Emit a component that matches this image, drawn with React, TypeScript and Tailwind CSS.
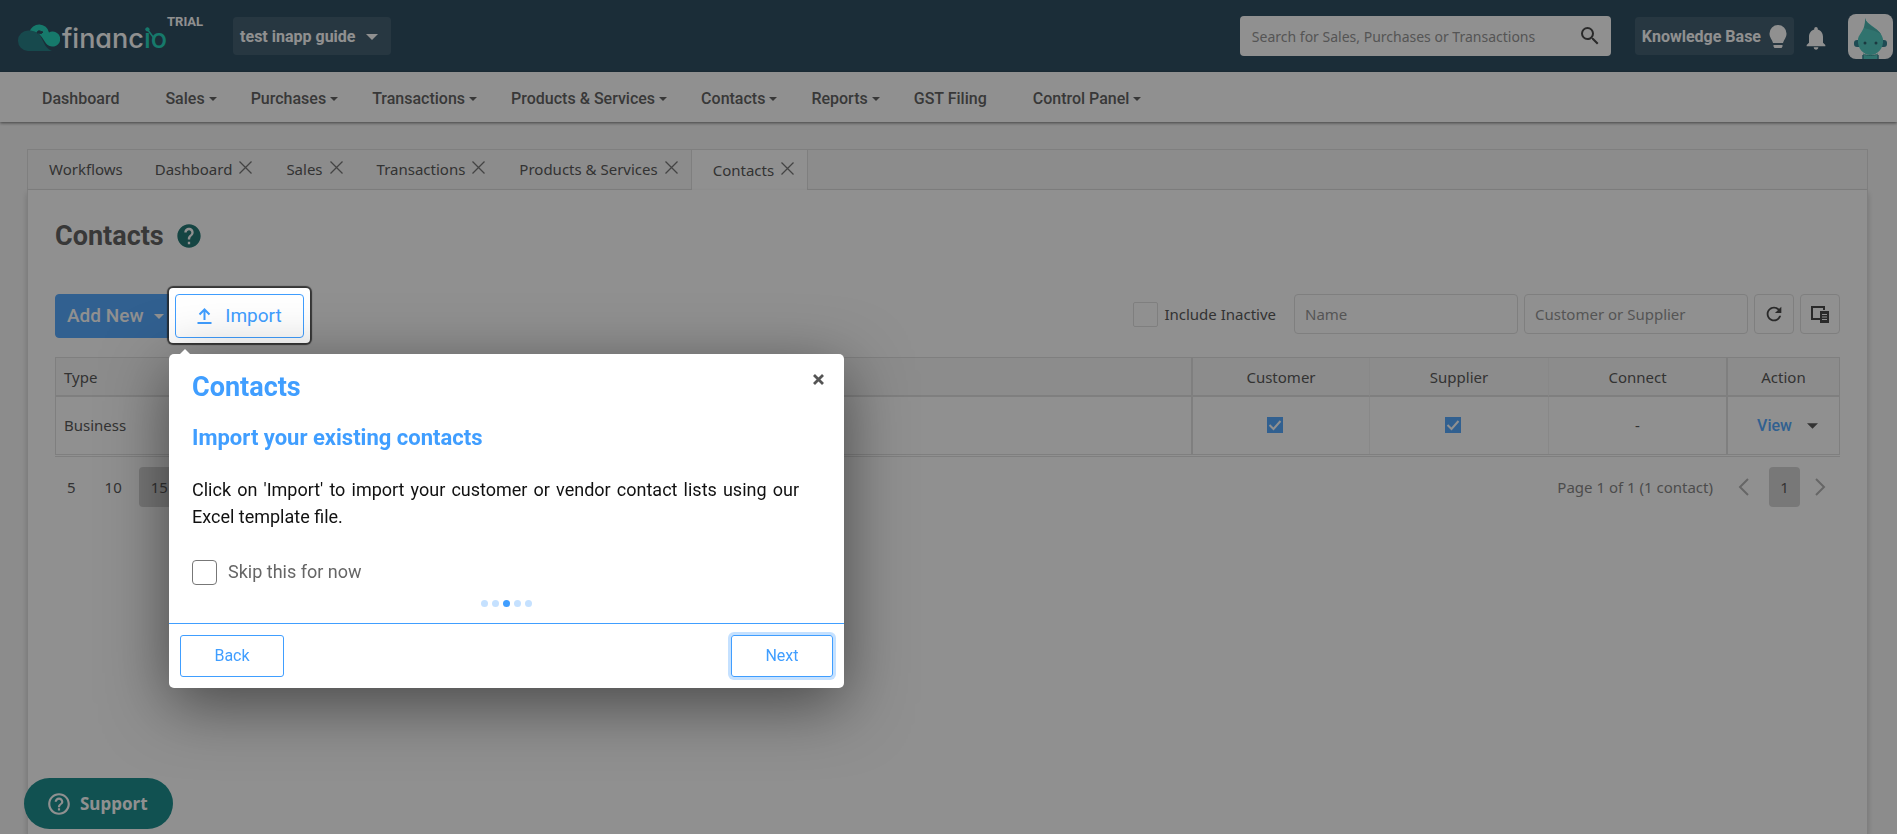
import { ReactNode } from "react";
import clsx from "clsx";
import {
  MdSearch,
  MdHelp,
  MdHelpOutline,
  MdRefresh,
  MdNotifications,
} from "react-icons/md";

const navItems = [
  { label: "Dashboard", menu: false },
  { label: "Sales", menu: true },
  { label: "Purchases", menu: true },
  { label: "Transactions", menu: true },
  { label: "Products & Services", menu: true },
  { label: "Contacts", menu: true },
  { label: "Reports", menu: true },
  { label: "GST Filing", menu: false },
  { label: "Control Panel", menu: true },
];

const tabs = [
  "Dashboard",
  "Sales",
  "Transactions",
  "Products & Services",
  "Contacts",
];

const contacts = [
  { type: "Business", customer: true, supplier: true, connect: "-" },
];

const pageSizes = [5, 10, 15];

const Caret = ({ className }: { className: string }) => (
  <svg viewBox="0 0 10 5" className={className} fill="currentColor">
    <path d="M0 0h10L5 5z" />
  </svg>
);

const Cross = () => (
  <svg viewBox="0 0 13 13" className="h-[13px] w-[13px]" stroke="currentColor">
    <path d="M.5.5l12 12M12.500.5l-12 12" fill="none" strokeWidth="1.300" />
  </svg>
);

const Logo = () => (
  <a href="#" className="flex items-start text-white">
    <svg viewBox="0 0 42 30" className="mt-[6px] h-[30px] w-[42px]">
      <path
        d="M11.500 11A10 10 0 0 1 31 11.500A7.500 7.500 0 1 1 34 25.500C27 25 26 17 21 13z"
        fill="#0bd0b5"
      />
      <path
        d="M10.500 9.500C17 9.500 21 12 23.500 17C26 22 28 28 34 30H10A10 10 0 0 1 10.500 9.500z"
        fill="#0c7178"
      />
      <path
        d="M19 12c0-2 2-3 4-1.500l2 .5-1.500 1.500z"
        fill="#15394f"
        stroke="#15394f"
      />
    </svg>
    <span className="relative mt-[6px] ml-[2px] font-['Inter'] text-[27px] leading-[36px] font-medium [font-feature-settings:'cv11','ss03']">
      financ<span className="text-[#0bd0b5]">io</span>
      <svg
        viewBox="0 0 22 24"
        className="absolute right-0 top-[6px] h-6 w-[22px]"
      >
        <path d="M2.500 2.500l6 8" stroke="#0bd0b5" strokeWidth="1.500" />
        <circle cx="2.500" cy="2.500" r="2" fill="#0bd0b5" />
      </svg>
    </span>
    <span className="mt-px text-[13px] leading-3 font-bold">TRIAL</span>
  </a>
);

const Avatar = () => (
  <svg viewBox="0 0 45 45" className="h-[45px] w-[45px] rounded-lg bg-white">
    <rect x="6" y="26" width="33" height="7" rx="3" fill="#1c7486" />
    <path
      d="M17 4c1 7 16 10 18 21 1 10-6 16-12.500 16S9 35 10 25c1-6 8-9 7-21z"
      fill="#3fc5bb"
    />
    <path d="M17 4c1 7 12 10 16 16-7-4-14-5-17-6 1-3 1-6 1-10z" fill="#35aca6" />
    <path d="M15 41h15v4H15z" fill="#3fc5bb" />
    <path d="M15 41v4M30 41v4" stroke="#1c7486" strokeWidth="1.500" />
    <path d="M15 40c4 2 11 2 15 0" stroke="#278f8d" fill="none" />
    <circle cx="17" cy="29" r="1.500" fill="#15505f" />
    <circle cx="28" cy="29" r="1.500" fill="#15505f" />
  </svg>
);

const Tick = ({ label }: { label: string }) => (
  <span className="relative mr-3 mb-1 inline-block h-4 w-4 align-middle">
    <input
      type="checkbox"
      aria-label={label}
      defaultChecked
      className="block h-4 w-4 appearance-none bg-[#409eff]"
    />
    <svg
      viewBox="0 0 16 16"
      className="pointer-events-none absolute inset-0"
      fill="none"
      stroke="#fff"
      strokeWidth="2"
    >
      <path d="M2.500 8l4 4 7-8" />
    </svg>
  </span>
);

const SquareButton = ({
  label,
  children,
}: {
  label: string;
  children: ReactNode;
}) => (
  <button
    aria-label={label}
    className="flex h-10 w-10 items-center justify-center rounded border border-[#dcdcdc] text-[#333]"
  >
    {children}
  </button>
);

const Header = () => (
  <header className="flex h-[72px] items-center justify-between bg-[#15394f] pr-1 pl-[18px] font-['Roboto']">
    <div className="flex items-center">
      <Logo />
      <button className="ml-[30px] flex h-[38px] items-center gap-[11px] rounded bg-white/10 pt-px pr-[13px] pl-[7px] font-bold text-white">
        test inapp guide
        <Caret className="h-[6px] w-3" />
      </button>
    </div>
    <div className="flex items-center">
      <div className="relative">
        <input
          aria-label="Search"
          placeholder="Search for Sales, Purchases or Transactions"
          className="h-10 w-[371px] rounded bg-white px-3 font-['Noto_Sans'] text-[14px] placeholder:text-[#888]"
        />
        <MdSearch className="absolute top-2 right-[9px] h-6 w-6 text-[#333]" />
      </div>
      <button className="ml-6 flex h-[38px] items-center gap-2 rounded bg-white/10 pt-px pr-[7px] pl-[7px] font-bold text-white">
        Knowledge Base
        <svg viewBox="0 0 18 24" className="h-6 w-[18px]" fill="currentColor">
          <path d="M9 0a8.500 8.500 0 0 1 8.500 8.500c0 4-2.500 6-3.500 9.500H4C3 14.500.5 12.500.5 8.500A8.500 8.500 0 0 1 9 0zM4.500 20h9v1.500l-1 1.500h-7l-1-1.500z" />
        </svg>
      </button>
      <button aria-label="Notifications" className="ml-[8px] pt-1 text-white">
        <MdNotifications className="h-7 w-7" />
      </button>
      <a href="#" aria-label="Profile" className="ml-[18px]">
        <Avatar />
      </a>
    </div>
  </header>
);

const Navbar = () => (
  <nav className="flex h-[50px] items-center bg-white px-[25px] pt-[3px] font-['Roboto'] font-medium text-[#4f4f4f] shadow-[0_1px_3px_rgba(0,0,0,0.6)]">
    {navItems.map((item) => (
      <a
        key={item.label}
        href="#"
        className={clsx(
          "flex items-center gap-1 pl-[17px]",
          item.menu ? "pr-[17px]" : "pr-[29px]"
        )}
      >
        {item.label}
        {item.menu && <Caret className="h-1 w-2" />}
      </a>
    ))}
  </nav>
);

const TabBar = () => (
  <div className="flex h-[41px] border border-b-0 border-[#dcdcdc] bg-[#f7f7f7]">
    <button className="border-b border-[#dcdcdc] pr-[11px] pl-[21px]">
      Workflows
    </button>
    {tabs.map((tab) => (
      <div
        key={tab}
        className={clsx(
          "flex items-center gap-[7px] border-[#dcdcdc] pr-[13px] pl-[21px]",
          tab === "Contacts" ? "border-x bg-white" : "border-b"
        )}
      >
        <button>{tab}</button>
        <button aria-label={`Close ${tab}`} className="pb-1 text-[#666]">
          <Cross />
        </button>
      </div>
    ))}
    <div className="flex-1 border-b border-[#dcdcdc]" />
  </div>
);

const GuideDialog = () => (
  <div
    role="dialog"
    aria-labelledby="guide-title"
    className="absolute top-[60px] -left-[6px] z-50 w-[675px] rounded-[5px] bg-white font-['Roboto'] text-[16px] font-normal shadow-[0_16px_64px_rgba(0,0,0,0.5)]"
  >
    <span className="absolute -top-[5px] left-[11px] text-white">
      <Caret className="block h-[5px] w-[10px] rotate-180" />
    </span>
    <button
      aria-label="Close guide"
      className="absolute top-5 right-5 text-[#555]"
    >
      <svg viewBox="0 0 11 11" className="h-[11px] w-[11px]">
        <path d="M1 1l9 9M10 1l-9 9" stroke="currentColor" strokeWidth="2.800" />
      </svg>
    </button>
    <div className="pt-[17px] pr-[45px] pl-[23px]">
      <h2
        id="guide-title"
        className="text-[27px] leading-8 font-bold text-[#409eff]"
      >
        Contacts
      </h2>
      <h3 className="mt-[19px] text-[22px] leading-8 font-bold text-[#409eff]">
        Import your existing contacts
      </h3>
      <p className="mt-[22px] text-justify text-[18px] leading-[27px] text-[#111]">
        Click on 'Import' to import your customer or vendor contact lists using
        our Excel template file.
      </p>
      <label className="mt-7 flex items-center gap-[11px] text-[18px] leading-7 text-[#666]">
        <input
          type="checkbox"
          className="h-[25px] w-[25px] appearance-none rounded border border-[#777]"
        />
        Skip this for now
      </label>
    </div>
    <div className="mt-[14px] flex justify-center gap-1">
      {[0, 1, 2, 3, 4].map((step) => (
        <span
          key={step}
          className={clsx(
            "h-[7px] w-[7px] rounded-full",
            step === 2 ? "bg-[#409eff]" : "bg-[#c5e1ff]"
          )}
        />
      ))}
    </div>
    <div className="mt-4 flex justify-between border-t border-[#409eff] p-[11px]">
      <button className="h-[42px] w-[104px] rounded-[3px] border border-[#409eff] text-[#409eff]">
        Back
      </button>
      <button className="h-[42px] w-[102px] rounded-[3px] border border-[#409eff] text-[#409eff] ring-3 ring-[#c5e1ff]">
        Next
      </button>
    </div>
  </div>
);

const Toolbar = () => (
  <div className="flex items-start justify-between">
    <div className="flex font-['Roboto'] font-normal">
      <button className="flex h-11 w-[118px] items-center gap-[10px] rounded border border-[#409eff] bg-[#409eff] pl-[11px] text-[19px] font-medium text-white">
        Add New
        <Caret className="h-[5px] w-[10px]" />
      </button>
      <div className="relative ml-[2px]">
        {/* dims everything except the highlighted button */}
        <div className="absolute -inset-x-[6px] -top-[6px] -bottom-[5px] z-40 rounded bg-white shadow-[0_0_1px_2px_rgba(33,33,33,0.8),0_0_0_5000px_rgba(33,33,33,0.5)]" />
        <button className="relative z-40 flex h-11 w-[129px] items-center justify-center gap-[13px] rounded border border-[#409eff] bg-white text-[19px] text-[#409eff]">
          <svg
            viewBox="0 0 15 16"
            className="h-4 w-[15px]"
            fill="none"
            stroke="currentColor"
            strokeWidth="2"
          >
            <path d="M.5 15h14M7.500 12V2M2.500 6.500l5-5 5 5" />
          </svg>
          Import
        </button>
        <GuideDialog />
      </div>
    </div>
    <div className="flex items-center gap-[6px]">
      <label className="mr-3 flex items-center gap-[6px]">
        <input
          type="checkbox"
          className="h-[25px] w-[25px] appearance-none rounded-[2px] border border-[#dcdcdc]"
        />
        Include Inactive
      </label>
      <input
        aria-label="Name"
        placeholder="Name"
        className="h-10 w-[224px] rounded border border-[#dcdcdc] px-[10px] placeholder:text-[#888]"
      />
      <input
        aria-label="Customer or Supplier"
        placeholder="Customer or Supplier"
        className="h-10 w-[224px] rounded border border-[#dcdcdc] px-[10px] placeholder:text-[#888]"
      />
      <SquareButton label="Refresh">
        <MdRefresh className="h-[22px] w-[22px]" />
      </SquareButton>
      <SquareButton label="Choose columns">
        <svg viewBox="0 0 18 17" className="h-[17px] w-[18px]">
          <path
            d="M13 4V1H1v12h8"
            fill="none"
            stroke="currentColor"
            strokeWidth="2"
          />
          <path
            d="M9 5h9v12H9zM11 8v1h5V8zM11 10.500v1h5v-1zM11 13v1h5v-1z"
            fill="currentColor"
            fillRule="evenodd"
          />
        </svg>
      </SquareButton>
    </div>
  </div>
);

const ContactsTable = () => (
  <div className="mt-[19px] border-b border-[#dcdcdc] pb-px">
    <table className="w-full table-fixed border-separate border-spacing-0 border border-[#dcdcdc]">
      <thead className="bg-[#f7f7f7]">
        <tr className="h-[39px] *:border-b-2 *:border-[#dcdcdc] *:pt-px *:font-normal">
          <th className="w-[115px] pl-2 text-left">Type</th>
          <td></td>
          <th className="w-[178px] border-l-2">Customer</th>
          <th className="w-[179px] border-l border-l-[#eee]!">Supplier</th>
          <th className="w-[178px] border-l border-l-[#eee]!">Connect</th>
          <th className="w-[113px] border-l-2">Action</th>
        </tr>
      </thead>
      <tbody>
        {contacts.map((contact) => (
          <tr
            key={contact.type}
            className="h-[57px] text-center *:border-[#dcdcdc]"
          >
            <td className="pl-2 text-left">{contact.type}</td>
            <td></td>
            <td className="border-l-2">
              {contact.customer && <Tick label="Customer" />}
            </td>
            <td className="border-l border-l-[#eee]!">
              {contact.supplier && <Tick label="Supplier" />}
            </td>
            <td className="border-l border-l-[#eee]!">{contact.connect}</td>
            <td className="border-l-2">
              <div className="flex items-center justify-center gap-[15px] pl-2 font-['Roboto'] text-[16px]">
                <a href="#" className="font-medium text-[#409eff]">
                  View
                </a>
                <Caret className="h-[6px] w-[11px]" />
              </div>
            </td>
          </tr>
        ))}
      </tbody>
    </table>
  </div>
);

const Pager = () => (
  <div className="mt-[10px] flex h-10 items-center justify-between">
    <div className="flex gap-[5px]">
      {pageSizes.map((size) => (
        <button
          key={size}
          className={clsx("h-10 rounded px-3", size === 15 && "bg-[#cfcfcf]")}
        >
          {size}
        </button>
      ))}
    </div>
    <div className="flex items-center">
      <span className="mr-[25px] text-[#777]">Page 1 of 1 (1 contact)</span>
      <button aria-label="Previous page" className="text-[#aaa]">
        <svg viewBox="0 0 11 18" className="h-[18px] w-[11px]">
          <path
            d="M10 1L2 9l8 8"
            fill="none"
            stroke="currentColor"
            strokeWidth="2"
          />
        </svg>
      </button>
      <button className="mr-[15px] ml-5 h-10 w-[31px] rounded bg-[#cfcfcf]">
        1
      </button>
      <button aria-label="Next page" className="mr-[14px] text-[#aaa]">
        <svg viewBox="0 0 11 18" className="h-[18px] w-[11px]">
          <path
            d="M1 1l8 8-8 8"
            fill="none"
            stroke="currentColor"
            strokeWidth="2"
          />
        </svg>
      </button>
    </div>
  </div>
);

const App = () => {
  return (
    <div className="flex min-h-screen flex-col overflow-hidden bg-[#f7f7f7] font-['Noto_Sans',sans-serif] text-[15px] text-[#444]">
      <div className="text-[16px]">
        <Header />
        <Navbar />
      </div>
      <main className="mt-[27px] mr-[29px] ml-[27px] flex flex-1 flex-col">
        <TabBar />
        <section className="flex-1 border-x border-[#dcdcdc] bg-white px-[27px] pt-7 shadow-[0_3px_6px_rgba(0,0,0,0.2)]">
          <div className="mb-10 flex items-center gap-[11px] font-['Roboto']">
            <h1 className="text-[27px] leading-9 font-bold text-[#4f4f4f]">
              Contacts
            </h1>
            <MdHelp className="h-7 w-7 text-[#086864]" />
          </div>
          <Toolbar />
          <ContactsTable />
          <Pager />
        </section>
      </main>
      <button className="fixed bottom-[5px] left-6 flex h-[51px] items-center gap-2 rounded-full bg-[#008080] pr-[25px] pl-[22px] font-['Noto_Sans'] text-[17px] font-bold text-white">
        <MdHelpOutline className="h-[26px] w-[26px]" />
        Support
      </button>
    </div>
  );
};

export default App;
